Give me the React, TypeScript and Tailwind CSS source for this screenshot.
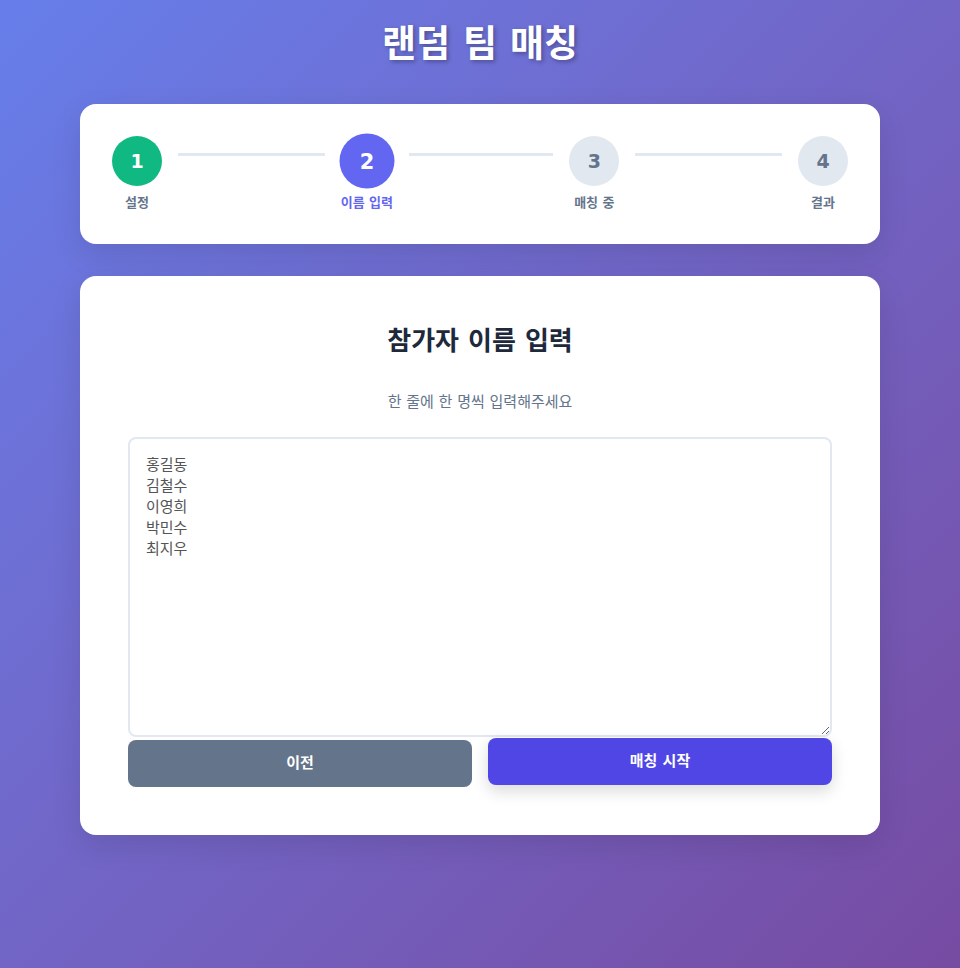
const steps = [
  { num: 1, label: "설정", state: "done" },
  { num: 2, label: "이름 입력", state: "active" },
  { num: 3, label: "매칭 중", state: "todo" },
  { num: 4, label: "결과", state: "todo" },
];

const names = ["홍길동", "김철수", "이영희", "박민수", "최지우"].join("\n");

function Step({ num, label, state }: { num: number; label: string; state: string }) {
  const circle =
    state === "done"
      ? "bg-[#10b981] text-white"
      : state === "active"
      ? "bg-[#6366f1] text-white scale-110"
      : "bg-[#e2e8f0] text-[#64748b]";
  const text = state === "active" ? "text-[#6366f1]" : "text-[#64748b]";
  return (
    <div className="flex flex-col items-center gap-[8px]">
      <div className={`flex h-[50px] w-[50px] items-center justify-center rounded-full text-[19px] font-bold ${circle}`}>
        {num}
      </div>
      <span className={`text-[13px] font-semibold leading-[18px] whitespace-nowrap ${text}`}>{label}</span>
    </div>
  );
}

export default function App() {
  return (
    <div
      className="min-h-[968px] bg-gradient-to-br from-[#667eea] to-[#764ba2] px-[80px] pt-[21px]"
      style={{ fontFamily: '"DejaVu Sans", "Noto Sans CJK KR", sans-serif' }}
    >
      <h1 className="mb-[35px] text-center text-[37px] font-bold leading-[48px] text-white [text-shadow:2px_2px_4px_rgba(0,0,0,0.3)]">
        랜덤 팀 매칭
      </h1>

      <div className="mb-[32px] rounded-2xl bg-white p-[32px] shadow-[0_10px_30px_rgba(0,0,0,0.1)]">
        <div className="flex items-start">
          {steps.map((s, i) => (
            <div key={s.num} className={`flex items-start ${i < steps.length - 1 ? "flex-1" : ""}`}>
              <Step {...s} />
              {i < steps.length - 1 && (
                <div className="mx-[16px] mt-[17px] h-[3px] flex-1 bg-[#e2e8f0]" />
              )}
            </div>
          ))}
        </div>
      </div>

      <div className="rounded-2xl bg-white p-[48px] shadow-[0_10px_30px_rgba(0,0,0,0.1)]">
        <h2 className="mb-[33px] text-center text-[26px] font-bold leading-[34px] text-[#1e293b]">
          참가자 이름 입력
        </h2>
        <p className="mb-[24px] text-center text-[15px] leading-[22px] text-[#64748b]">
          한 줄에 한 명씩 입력해주세요
        </p>
        <textarea
          defaultValue={names}
          className="block h-[300px] w-full rounded-lg border-2 border-[#e2e8f0] p-[16px] text-[15px] leading-[21px] text-[#555] outline-none"
        />
        <div className="mt-[3px] flex items-start gap-[16px]">
          <button className="h-[47px] flex-1 rounded-lg bg-[#64748b] text-[15px] font-bold text-white">
            이전
          </button>
          <button className="-mt-[2px] h-[47px] flex-1 rounded-lg bg-[#4f46e5] text-[15px] font-bold text-white shadow-[0_6px_16px_rgba(0,0,0,0.15)]">
            매칭 시작
          </button>
        </div>
      </div>
    </div>
  );
}
